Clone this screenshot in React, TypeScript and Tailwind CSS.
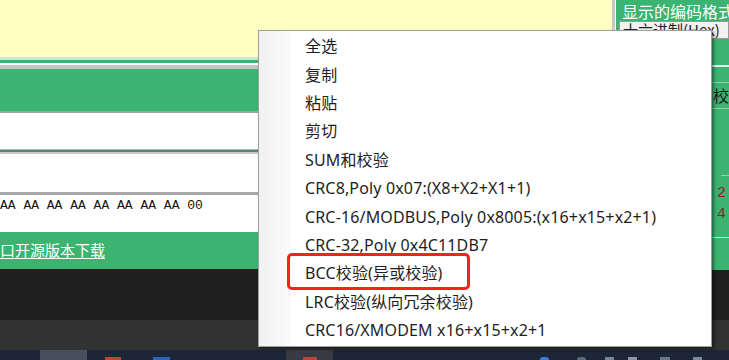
import React from 'react';

const MENU_ITEMS = [
  '全选',
  '复制',
  '粘贴',
  '剪切',
  'SUM和校验',
  'CRC8,Poly 0x07:(X8+X2+X1+1)',
  'CRC-16/MODBUS,Poly 0x8005:(x16+x15+x2+1)',
  'CRC-32,Poly 0x4C11DB7',
  'BCC校验(异或校验)',
  'LRC校验(纵向冗余校验)',
  'CRC16/XMODEM x16+x15+x2+1',
];

const uiFont = { fontFamily: '"Noto Sans", "Noto Sans CJK SC", sans-serif' };
const cjkFont = { fontFamily: '"Noto Sans CJK SC", sans-serif' };
const monoFont = { fontFamily: '"Liberation Mono", monospace' };

const ContextMenu = () => (
  <div
    className="absolute left-[258px] top-[30px] w-[454px] h-[317px] bg-white border border-[#a0a0a0] shadow-[2px_2px_3px_rgba(0,0,0,0.45)] flex"
    style={uiFont}
  >
    {/* icon gutter */}
    <div className="w-[32px] h-full bg-gradient-to-r from-[#f1f1f1] to-[#fbfbfb]" />
    <ul className="flex-1 pt-[1px]">
      {MENU_ITEMS.map(item => (
        <li
          key={item}
          className="h-[28.4px] flex items-center pl-[14px] text-[16px] tracking-[0.15px] text-[#1e1e1e] whitespace-nowrap"
        >
          {item}
        </li>
      ))}
    </ul>
    {/* annotation box around the BCC item */}
    <div className="absolute left-[28px] top-[222px] w-[183px] h-[37px] border-[3px] border-[#ff1e1e] rounded-[5px]" />
  </div>
);

const RightPanel = () => (
  <div className="w-[117px] h-full flex">
    <div className="w-[3px] h-full bg-[#c8c8c8]" />
    <div className="w-[1px] h-full bg-white" />
    <div className="flex-1 h-full bg-[#3cb371] flex flex-col overflow-hidden">
      <div className="h-[21px] pl-[6px] pt-[2px] text-[16px] leading-[18px] text-white whitespace-nowrap" style={cjkFont}>
        显示的编码格式
      </div>
      <div className="h-[18px] ml-[3px] bg-[#f2f2f2] border border-[#9a9a9a] pl-[3px] text-[15px] leading-[16px] text-[#222] whitespace-nowrap overflow-hidden" style={cjkFont}>
        十六进制(Hex)
      </div>
      <div className="h-[26px]" />
      <div className="h-[2px] ml-[95px] bg-[#e6f3ea]" />
      <div className="h-[15px]" />
      <div className="h-[1px] ml-[95px] bg-[#8fd1aa]" />
      <div className="h-[25px] pl-[97px] text-[16px] leading-[25px] text-[#1a1a1a] whitespace-nowrap" style={cjkFont}>
        校
      </div>
      <div className="h-[1px] ml-[95px] bg-[#8fd1aa]" />
      <div className="h-[66px]" />
      <div className="h-[1px] ml-[105px] bg-[#8fd1aa]" />
      <div className="h-[8px]" />
      <div className="h-[20px] pl-[101px] text-[15px] leading-[20px] text-[#9b1c1c] whitespace-nowrap" style={monoFont}>
        2
      </div>
      <div className="h-[21px] pl-[101px] text-[15px] leading-[21px] text-[#9b1c1c] whitespace-nowrap" style={monoFont}>
        4
      </div>
      <div className="h-[12px]" />
      <div className="h-[1px] ml-[95px] bg-[#cfe9d8]" />
    </div>
  </div>
);

const LeftPanel = () => (
  <div className="flex-1 h-full flex flex-col">
    <div className="h-[57px] bg-[#ffffc2]" />
    <div className="h-[3px] bg-[#dcdcd0]" />
    <div className="h-[3px] bg-[#3cb371]" />
    <div className="h-[2px] bg-white" />
    <div className="h-[4px] bg-[#c4c4c4]" />
    <div className="h-[42px] bg-[#3cb371]" />
    <div className="h-[2px] bg-[#a0a0a0]" />
    <div className="h-[36px] bg-white" />
    <div className="h-[1px] bg-[#b4b4b4]" />
    <div className="h-[2px] bg-[#4f8a68]" />
    <div className="h-[2px] bg-[#c8c8c8]" />
    <div className="h-[38px] bg-white" />
    <div className="h-[3px] bg-[#a8a8a8]" />
    <div className="h-[37px] bg-white pt-[3px] text-[13px] leading-[16px] text-[#111] whitespace-pre" style={monoFont}>
      AA AA AA AA AA AA AA AA 00
    </div>
    <div className="h-[37px] bg-[#3cb371] flex items-center">
      <a className="text-[15px] text-white underline underline-offset-2 whitespace-nowrap" style={cjkFont}>
        口开源版本下载
      </a>
    </div>
  </div>
);

const Taskbar = () => (
  <div className="h-[10px] bg-[#1c2636] flex items-start">
    <div className="w-[40px]" />
    <div className="w-[47px] h-full bg-[#464f5c]" />
    <div className="w-[18px]" />
    <div className="w-[16px] h-[3px] mt-[7px] bg-[#c0472e]" />
    <div className="w-[32px]" />
    <div className="w-[17px] h-[3px] mt-[7px] bg-[#2d66b8]" />
    <div className="w-[116px]" />
    <div className="w-[47px] h-full bg-[#3a3a46] flex justify-center">
      <div className="w-[14px] h-[3px] mt-[7px] bg-[#b8453a]" />
    </div>
    <div className="w-[207px]" />
    <div className="w-[9px] h-[3px] mt-[7px] rounded-t-full bg-[#3d7fd6]" />
    <div className="w-[28px]" />
    <div className="w-[9px] h-[3px] mt-[7px] rounded-t-full bg-[#5a6a80]" />
    <div className="w-[19px]" />
    <div className="w-[9px] h-[3px] mt-[7px] bg-[#7a8698]" />
    <div className="w-[14px]" />
    <div className="w-[9px] h-[3px] mt-[7px] bg-[#8b95a5]" />
    <div className="w-[23px]" />
    <div className="w-[10px] h-[3px] mt-[7px] bg-[#6b7687]" />
    <div className="w-[23px]" />
    <div className="w-[9px] h-[3px] mt-[7px] bg-[#7d8898]" />
  </div>
);

export default function App() {
  return (
    <div className="relative w-[729px] h-[360px] overflow-hidden bg-[#202020] flex flex-col">
      <div className="h-[270px] flex">
        <LeftPanel />
        <RightPanel />
      </div>
      <div className="h-[50px] bg-[#1f1f1f]" />
      <div className="h-[30px] bg-[#323232]" />
      <Taskbar />
      <ContextMenu />
    </div>
  );
}
